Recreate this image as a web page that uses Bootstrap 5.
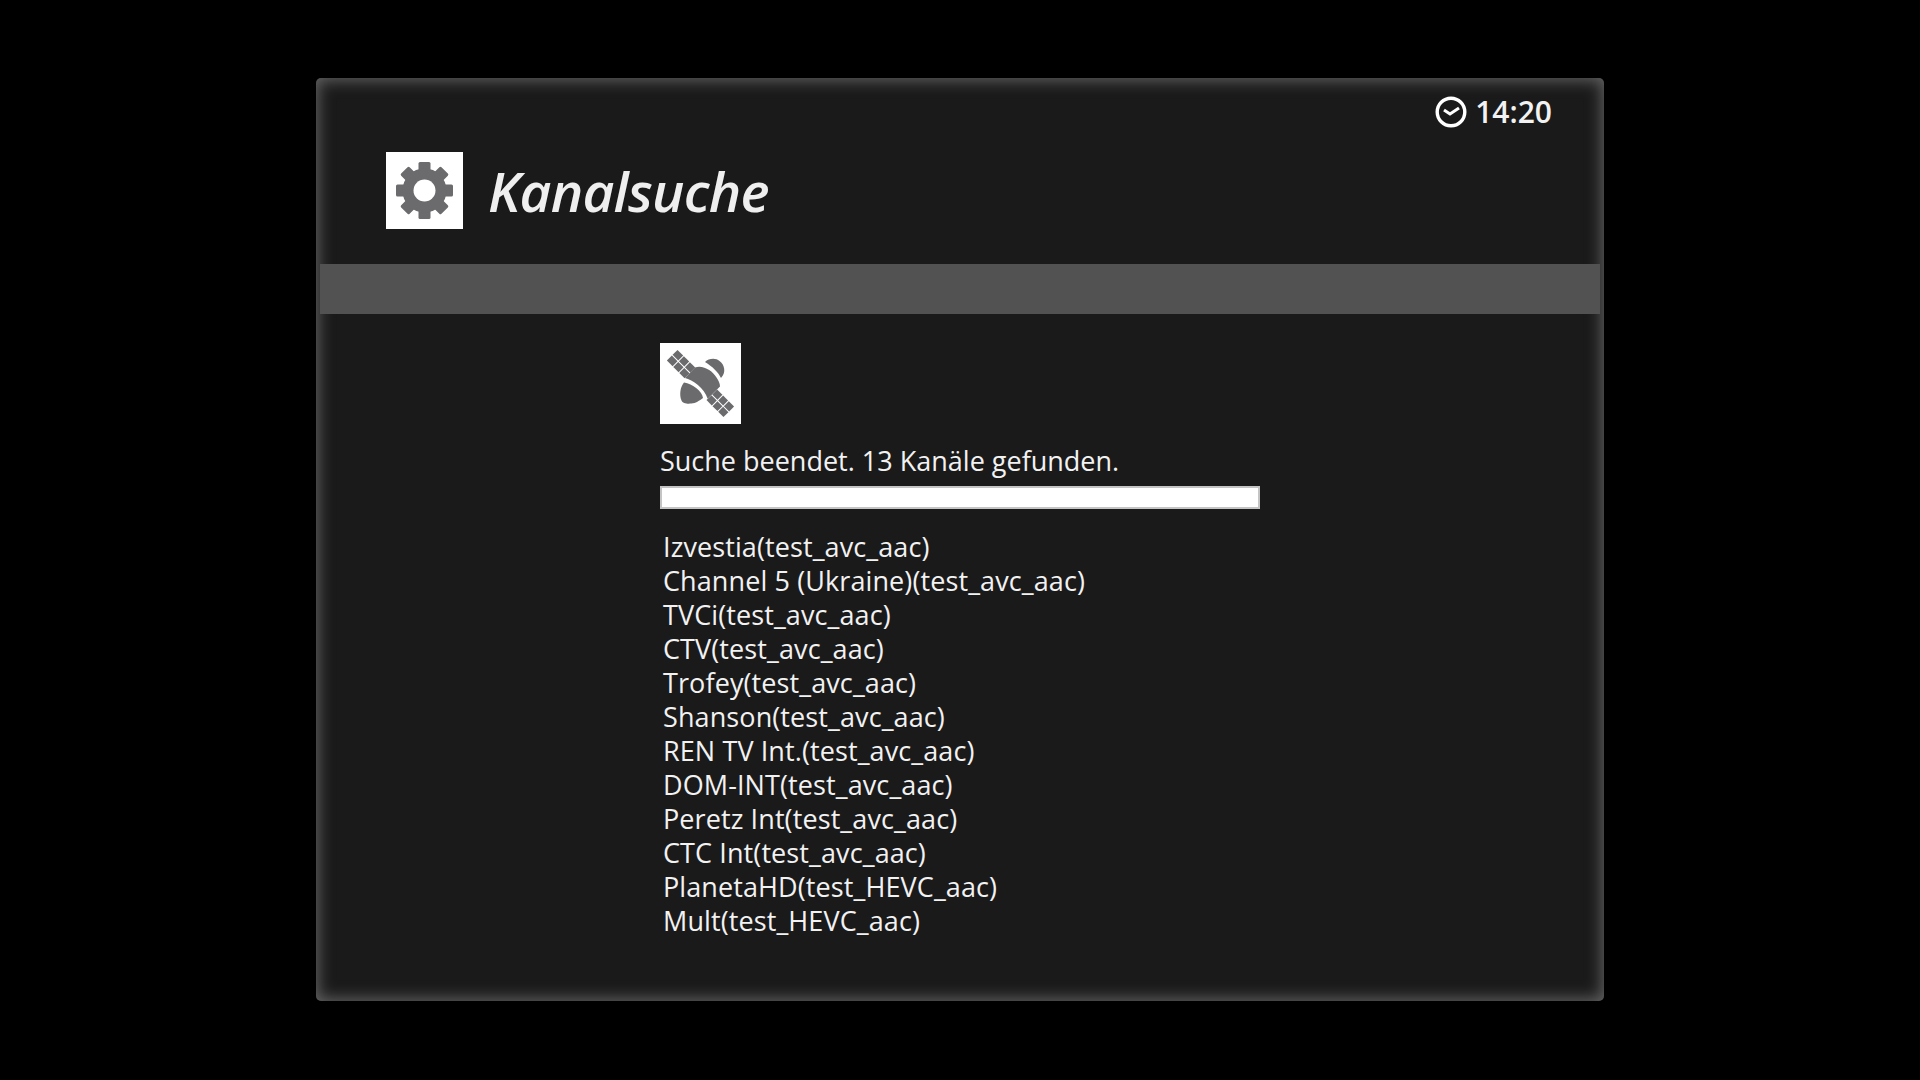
<!DOCTYPE html>
<html>
<head>
<title>Kanalsuche</title>
<link href="https://cdn.jsdelivr.net/npm/bootstrap@5.3.2/dist/css/bootstrap.min.css" rel="stylesheet">
<style>
body { background: #000; color: #f2f2f2; font-family: "Open Sans", "Noto Sans", sans-serif; }
.tv-panel { width: 1288px; height: 923px; margin: 78px auto 0; background: #1b1a1b; border-radius: 5px; box-shadow: inset 0 0 16px 2px #666; }
.tv-top { height: 74px; padding: 18px 52px 0 0; }
.tv-time { font-size: 30px; font-weight: 600; line-height: 32px; }
.tv-head { padding-left: 70px; margin-bottom: 35px; }
.tv-tile { background: #fff; flex: none; }
.tv-title { font-size: 55px; font-weight: 600; font-style: italic; line-height: 77px; margin: 0 0 0 25px; letter-spacing: -.75px; color: #efefef; }
.tv-bar { height: 50px; margin: 0 4px; background: #525253; }
.tv-body { padding: 29px 0 0 344px; }
.tv-status { font-size: 27px; line-height: 34px; margin-top: 20px; }
.tv-progress { width: 600px; height: 23px; margin-top: 8px; background: #fff; border: 2px solid #c4c4c4; }
.tv-list { margin: 21px 0 0; padding-left: 3px; font-size: 27px; line-height: 34px; letter-spacing: .1px; }
</style>
</head>
<body>
<main class="tv-panel">
    <div class="tv-top d-flex justify-content-end align-items-start gap-2">
        <svg width="32" height="32" viewBox="0 0 32 32" fill="none" stroke="#fff">
            <circle cx="16" cy="16" r="13.800" stroke-width="3.400"/>
            <path d="M9 14l6 4 9-6" stroke-width="3"/>
        </svg>
        <span class="tv-time">14:20</span>
    </div>
    <div class="tv-head d-flex align-items-center">
        <svg class="tv-tile" width="77" height="77" viewBox="-38.5 -38.5 77 77" fill="#6b6b6d">
            <rect x="-6" y="-28.500" width="12" height="57" rx="1.500"/>
            <rect x="-6" y="-28.500" width="12" height="57" rx="1.500" transform="rotate(45)"/>
            <rect x="-6" y="-28.500" width="12" height="57" rx="1.500" transform="rotate(90)"/>
            <rect x="-6" y="-28.500" width="12" height="57" rx="1.500" transform="rotate(135)"/>
            <circle r="16.500" fill="none" stroke="#6b6b6d" stroke-width="11"/>
            <circle r="11" fill="#fff"/>
        </svg>
        <h1 class="tv-title">Kanalsuche</h1>
    </div>
    <div class="tv-bar"></div>
    <div class="tv-body">
        <svg class="tv-tile d-block" width="81" height="81" viewBox="-40.5 -40.5 81 81" fill="#6b6b6d">
            <g transform="rotate(45)">
                <rect x="-40" y="-7.500" width="8" height="7"/>
                <rect x="-31" y="-7.500" width="7.500" height="7"/>
                <rect x="-22.500" y="-7.500" width="7.500" height="7"/>
                <rect x="-40" y="0.500" width="8" height="7"/>
                <rect x="-31" y="0.500" width="7.500" height="7"/>
                <rect x="-22.500" y="0.500" width="7.500" height="7"/>
                <rect x="16" y="-7.500" width="7.500" height="7"/>
                <rect x="24.500" y="-7.500" width="7" height="7"/>
                <rect x="32.500" y="-7.500" width="7.500" height="7"/>
                <rect x="16" y="0.500" width="7.500" height="7"/>
                <rect x="24.500" y="0.500" width="7" height="7"/>
                <rect x="32.500" y="0.500" width="7.500" height="7"/>
            </g>
            <path d="M-15.500-5.500L-5.500-16C2-19 12-13 16-6C18-3 19.500 0 19.500 3L7.200 15.200C4 5-8-4-15.500-5.500Z"/>
            <path d="M-16.500-1C-8 0 2 8 2.500 14.500C-1 17-5 20-9 20C-13 20.500-18 20-19 17C-21.500 11-20 3-16.500-1Z"/>
            <path d="M4.500-21.500C8-25 15-26 19-22.500C24-19 26-11 20.500-5.500C18-11 12-17 4.500-21.500Z"/>
        </svg>
        <div class="tv-status">Suche beendet. 13 Kanäle gefunden.</div>
        <div class="tv-progress"></div>
        <ul class="tv-list list-unstyled">
            <li>Izvestia(test_avc_aac)</li>
            <li>Channel 5 (Ukraine)(test_avc_aac)</li>
            <li>TVCi(test_avc_aac)</li>
            <li>CTV(test_avc_aac)</li>
            <li>Trofey(test_avc_aac)</li>
            <li>Shanson(test_avc_aac)</li>
            <li>REN TV Int.(test_avc_aac)</li>
            <li>DOM-INT(test_avc_aac)</li>
            <li>Peretz Int(test_avc_aac)</li>
            <li>CTC Int(test_avc_aac)</li>
            <li>PlanetaHD(test_HEVC_aac)</li>
            <li>Mult(test_HEVC_aac)</li>
        </ul>
    </div>
</main>
<script src="https://cdn.jsdelivr.net/npm/bootstrap@5.3.2/dist/js/bootstrap.bundle.min.js"></script>
</body>
</html>
